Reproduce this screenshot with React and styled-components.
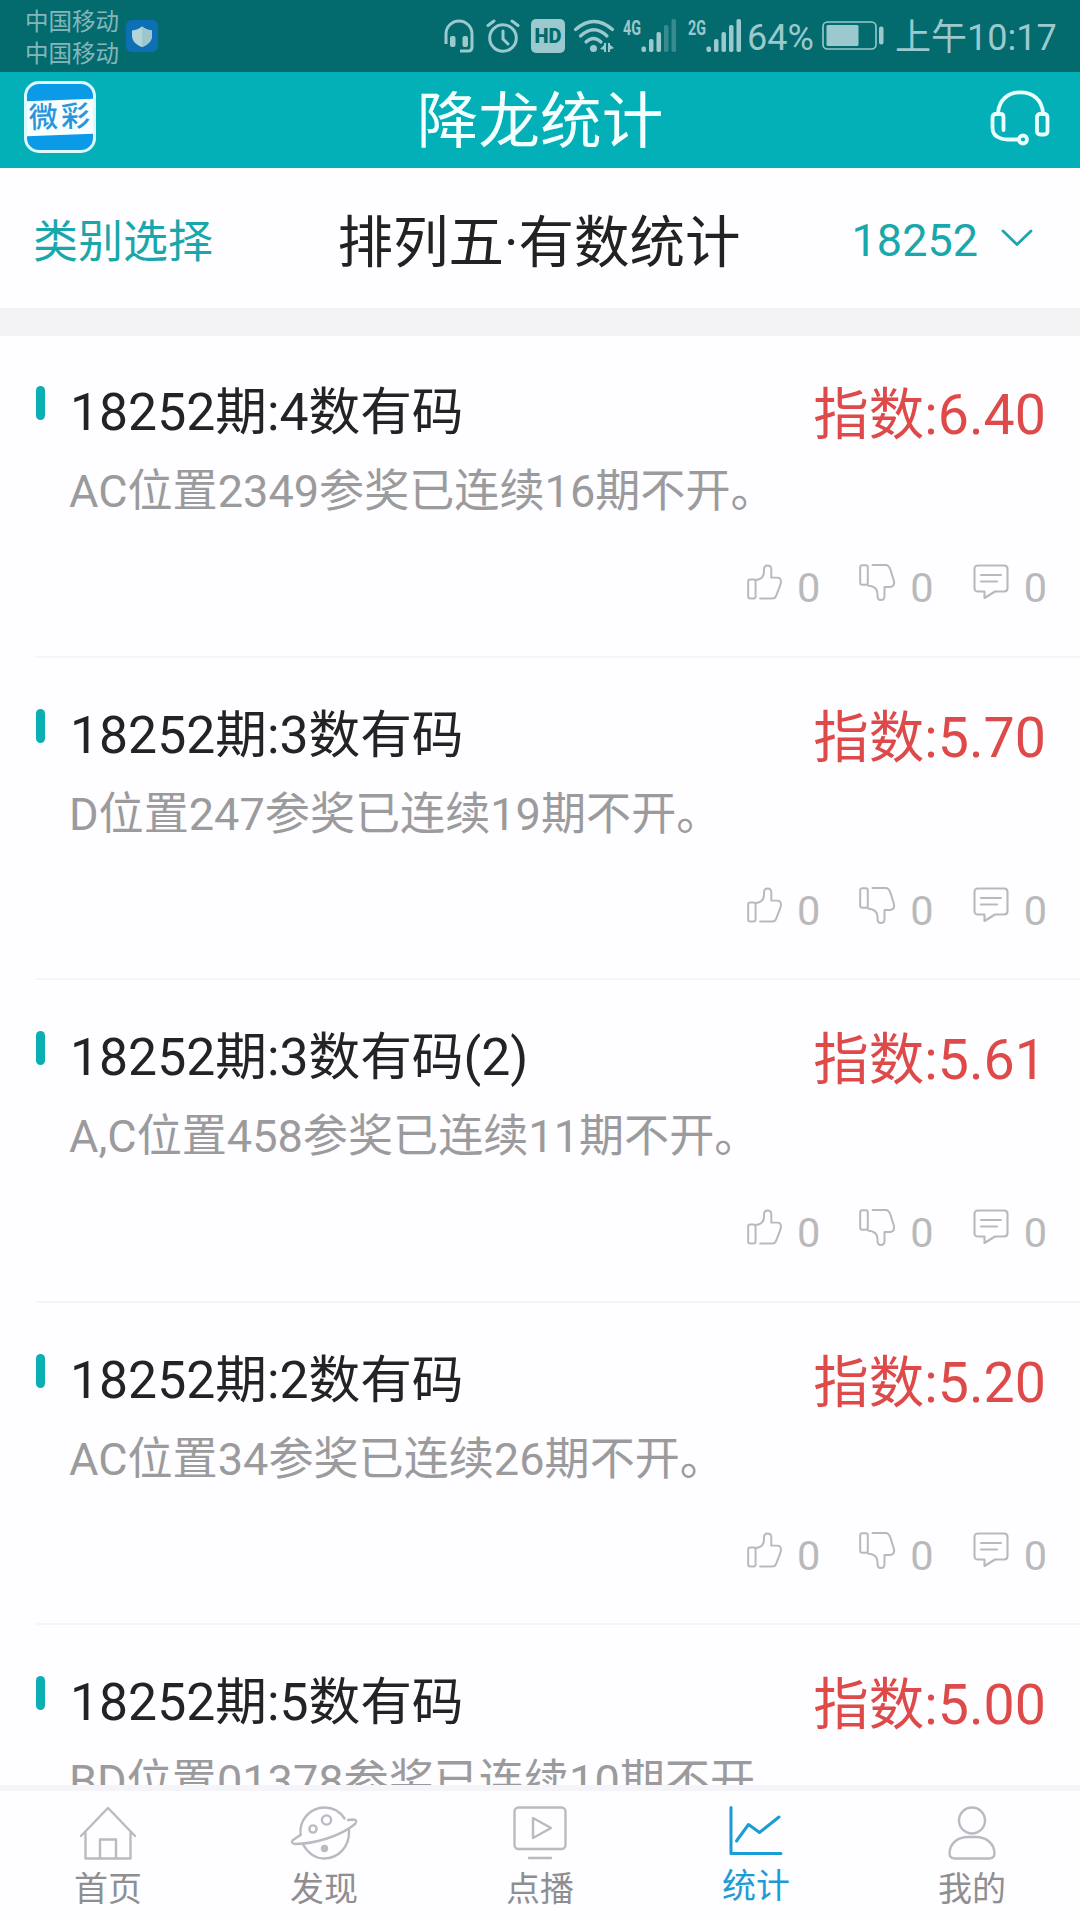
import React from "react";
import styled, { createGlobalStyle } from "styled-components";

const GlobalStyle = createGlobalStyle`
  * {
    box-sizing: border-box;
  }

  body {
    margin: 0;
    background: #fefdff;
    font-family: Roboto, "Noto Sans CJK SC", sans-serif;
  }

  svg {
    display: block;
    flex: none;
    overflow: visible;
  }
`;

const Screen = styled.div`
  width: 1080px;
  height: 1920px;
  display: flex;
  flex-direction: column;
  overflow: hidden;
  background: #fefdff;
`;

const StatusBar = styled.div`
  flex: none;
  height: 72px;
  display: flex;
  align-items: center;
  padding: 0 24px 0 25px;
  background: #036a6d;
  color: #9bc9cd;
`;

const Carriers = styled.div`
  width: 101px;
  padding-top: 3px;
  font-size: 23.5px;
  line-height: 32px;
  color: #83b7bb;
  white-space: nowrap;
`;

const StatusIcons = styled.div`
  display: flex;
  align-items: center;
  margin-left: auto;
`;

const StatusText = styled.span`
  width: ${(props) => props.$width}px;
  margin-left: ${(props) => props.$gap}px;
  padding-top: 3px;
  font-size: 36px;
  line-height: 68px;
  white-space: nowrap;
`;

const Gap = styled.i`
  width: ${(props) => props.$w}px;
`;

const Header = styled.header`
  flex: none;
  height: 96px;
  display: flex;
  align-items: center;
  justify-content: space-between;
  padding: 0 30px 0 24px;
  background: #03b0b8;
`;

const Logo = styled.div`
  width: 72px;
  height: 72px;
  margin-bottom: 6px;
  display: flex;
  align-items: center;
  justify-content: center;
  overflow: hidden;
  border: 3px solid #dcfaff;
  border-radius: 15px;
  background: #0a9ae8;
`;

const LogoBand = styled.div`
  flex: none;
  width: 76px;
  height: 35px;
  padding-left: 2px;
  background: #f8feff;
  color: #2b95dc;
  font-size: 29px;
  font-weight: 500;
  line-height: 34px;
  letter-spacing: 3px;
  text-align: center;
  white-space: nowrap;
  transform: rotate(-2deg);
`;

const HeaderTitle = styled.h1`
  margin: 4px 0 0;
  padding-right: 6px;
  color: #f4ffff;
  font-size: 61.7px;
  font-weight: 400;
  line-height: 92px;
`;

const FilterBar = styled.div`
  flex: none;
  height: 168px;
  display: grid;
  grid-template-columns: 1fr auto 1fr;
  align-items: center;
  padding: 4px 47px 0 33px;
  border-bottom: 28px solid #f3f2f5;
  color: #1aa7ab;
  font-size: 45px;
`;

const Category = styled.div`
  margin-top: -4px;
`;

const FilterTitle = styled.h2`
  margin: 7px 0 0 12px;
  color: #222;
  font-size: 55.5px;
  font-weight: 400;
  line-height: 80px;
`;

const Issue = styled.div`
  display: flex;
  align-items: center;
  justify-content: flex-end;
  gap: 23px;

  svg {
    margin-bottom: 4px;
  }
`;

const List = styled.main`
  flex: 1;
  min-height: 0;
  margin-top: -1px;
  overflow: hidden;
`;

const Item = styled.article`
  height: 322.6px;
  margin-left: 36px;
  padding: 39px 34px 0 0;
  display: grid;
  grid-template-columns: 34px 1fr auto;
  grid-template-rows: 72px 80px 1fr;
  border-bottom: 2px solid #f5f4f7;
`;

const Marker = styled.span`
  width: 9px;
  height: 34px;
  margin-top: 12px;
  border-radius: 5px;
  background: #0aafb3;
`;

const ItemTitle = styled.h3`
  margin: 0;
  padding-top: 3px;
  color: #232225;
  font-size: 51.7px;
  font-weight: 400;
  line-height: 72px;
  white-space: nowrap;
`;

const Score = styled.div`
  padding-top: 6px;
  color: #de4a49;
  font-size: 55.5px;
  line-height: 72px;
  white-space: nowrap;
`;

const Description = styled.p`
  grid-column: 2 / 4;
  margin: 11px 0 0 -1px;
  color: #9b9b9d;
  font-size: 45.1px;
  line-height: 70px;
  white-space: nowrap;
`;

const Actions = styled.div`
  grid-column: 1 / 4;
  display: flex;
  justify-content: flex-end;
  gap: 39px;
  margin-right: -1px;
  padding-top: 37px;
`;

const Action = styled.div`
  display: flex;
  align-items: flex-start;
  gap: 15px;
  color: #b9b9bb;
  font-size: 41.5px;
  line-height: 49px;

  svg {
    margin-top: 1px;
  }
`;

const TabBar = styled.nav`
  flex: none;
  height: 135px;
  display: grid;
  grid-template-columns: repeat(5, 1fr);
  border-top: 6px solid #f5f4f8;
`;

const Tab = styled.a`
  display: flex;
  flex-direction: column;
  align-items: center;
  padding-top: 15px;
  color: ${(props) => (props.$active ? "#1c9cd4" : "#8f8f92")};
  font-size: 34px;
  line-height: 44px;

  span {
    margin-top: ${(props) => (props.$active ? 4 : 7)}px;
  }

  svg {
    color: ${(props) => (props.$active ? "#1c9cd4" : "#b9bbc2")};
  }
`;

const items = [
  { title: "18252期:4数有码", score: "6.40", text: "AC位置2349参奖已连续16期不开。" },
  { title: "18252期:3数有码", score: "5.70", text: "D位置247参奖已连续19期不开。" },
  { title: "18252期:3数有码(2)", score: "5.61", text: "A,C位置458参奖已连续11期不开。" },
  { title: "18252期:2数有码", score: "5.20", text: "AC位置34参奖已连续26期不开。" },
  { title: "18252期:5数有码", score: "5.00", text: "BD位置01378参奖已连续10期不开" },
];

const stroke = {
  fill: "none",
  stroke: "currentColor",
  strokeLinecap: "round",
  strokeLinejoin: "round",
};

const ShieldIcon = () => (
  <svg width="32" height="32" viewBox="0 0 32 32">
    <rect width="32" height="32" rx="6" fill="#0d6fb4" />
    <path d="M16 6.500C19 9 22 10 26 10.500V16C26 21 21.500 25 16 27C10.500 25 6 21 6 16V10.500C10 10 13 9 16 6.500Z" fill="#b3d5d9" />
    <path d="M16 6.500C19 9 22 10 26 10.500V16C26 21 21.500 25 16 27Z" fill="#9fc6cf" />
  </svg>
);

const StatusHeadphones = () => (
  <svg width="32" height="34" viewBox="0 0 32 34">
    <path d="M3 25V15A13 13 0 0 1 29 15V28Q29 32 25 32H17" {...stroke} strokeWidth="3" strokeLinecap="butt" />
    <rect x="7" y="17" width="5.500" height="11" rx="2" fill="currentColor" />
    <rect x="19.500" y="17" width="5.500" height="11" rx="2" fill="currentColor" />
  </svg>
);

const AlarmIcon = () => (
  <svg width="34" height="34" viewBox="0 0 34 34" {...stroke} strokeWidth="3">
    <circle cx="17" cy="19" r="13.300" />
    <path d="M17 12V20L22 25M2 6.500L8 2M32 6.500L26 2" />
  </svg>
);

const HdIcon = () => (
  <svg width="34" height="34" viewBox="0 0 34 34">
    <rect width="34" height="34" rx="5" fill="currentColor" />
    <text x="17" y="24" textAnchor="middle" fill="#036a6d" fontSize="20" fontWeight="900" textLength="27">HD</text>
  </svg>
);

const WifiIcon = () => (
  <svg width="40" height="34" viewBox="0 0 40 34">
    <path d="M1.500 10.500Q20 -5.500 38.500 10.500M6.500 17Q20 4.500 33 17M12 23Q19.500 16 27 23" {...stroke} strokeWidth="3.200" />
    <circle cx="19.500" cy="29.500" r="3.500" fill="currentColor" />
    <path d="M31 24V33M35 24V33" stroke="currentColor" strokeWidth="2" />
    <path d="M31 25V31L26 30ZM35 25L40 29L35 31Z" fill="currentColor" />
  </svg>
);

const bars = [
  { y: 27.5, h: 5.5 },
  { y: 20, h: 13 },
  { y: 13, h: 20 },
  { y: 6, h: 27 },
  { y: 0, h: 33 },
];

const SignalIcon = ({ label, level }) => (
  <svg width="54" height="34" viewBox="0 0 54 34">
    <text x="0" y="16" fill="currentColor" fontSize="21" fontWeight="700" textLength="18" lengthAdjust="spacingAndGlyphs">{label}</text>
    {bars.map((bar, i) => (
      <rect key={i} x={18.5 + i * 7.5} y={bar.y} width="4.500" height={bar.h} rx="1.800" fill="currentColor" opacity={i < level ? 1 : 0.35} />
    ))}
  </svg>
);

const BatteryIcon = () => (
  <svg width="62" height="30" viewBox="0 0 62 30">
    <rect x="1" y="1" width="53" height="27" rx="4.500" {...stroke} strokeWidth="1.600" />
    <rect x="4.500" y="4" width="32" height="21" rx="1.500" fill="currentColor" />
    <rect x="57" y="5.500" width="4.500" height="18" rx="2" fill="currentColor" />
  </svg>
);

const ServiceIcon = () => (
  <svg width="60" height="56" viewBox="0 2 60 56" {...stroke} stroke="#e9ffff" strokeWidth="3.800">
    <path d="M8 23C9 10 18 2.300 30.500 2.300S52 10 53 23" />
    <path d="M13.500 40V27Q13.500 24 10.500 24H6Q2.500 24 2.500 27.500V38Q2.500 46 11 48.500Q14 49.500 18 49.500H28" />
    <rect x="47" y="24" width="10.500" height="20.500" rx="3" />
    <circle cx="33" cy="49.500" r="4" />
  </svg>
);

const ChevronIcon = () => (
  <svg width="32" height="18" viewBox="0 0 32 18" {...stroke} strokeWidth="2.800">
    <path d="M2 2L16 15.500L30 2" />
  </svg>
);

const LikeIcon = () => (
  <svg width="35" height="36" viewBox="0 0 36 36" {...stroke} strokeWidth="2">
    <rect x="1.200" y="15.500" width="7.600" height="19.500" rx="2" />
    <path d="M9 16C14.500 15.500 17.500 12 17.500 7V5Q17.500 1 21.200 1T25 5V13.500H31Q35 13.500 35 18Q34.500 21 32.500 25.500L30 32Q29 35 26 35H13.500" />
  </svg>
);

const DislikeIcon = () => (
  <svg width="36" height="37" viewBox="0 0 36 37" {...stroke} strokeWidth="2">
    <rect x="1.200" y="1.200" width="7.600" height="19.500" rx="2" />
    <path d="M9 21.500C15 22 18.500 25 18.500 30V32Q18.500 36 22 36T25.500 32V23H31.500Q36 22 35 17L31.500 6Q30 1 26.500 1H13.500" />
  </svg>
);

const CommentIcon = () => (
  <svg width="36" height="36" viewBox="0 0 36 36" {...stroke} strokeWidth="2.100">
    <path d="M5 1.500H31Q34.500 1.500 34.500 5V24Q34.500 27.500 31 27.500H22L11.500 34V27.500H5Q1.500 27.500 1.500 24V5Q1.500 1.500 5 1.500ZM8 11H28M8 17.500H24" />
  </svg>
);

const HomeIcon = () => (
  <svg width="58" height="54" viewBox="0 0 58 54" {...stroke} strokeWidth="2.400">
    <path d="M2 30L29 2L56 30M6.500 27V52.500H51.500V27M21 52V33.500H37V52" />
  </svg>
);

const DiscoverIcon = () => (
  <svg width="68" height="54" viewBox="0 0 68 54" {...stroke} strokeWidth="2.400">
    <path d="M10.500 29C9 14 20 1.500 34.500 1.500C43 1.500 50 5.500 54.500 12.500" />
    <path d="M10.500 29L3 34Q0 37 5 38C24 38 51 30 65 18Q68 14 63.500 13.500L58 14" />
    <path d="M13 38.500C18 47 25.500 52.500 34 52.500C48 52.500 60 41 59 24" />
    <circle cx="23" cy="23" r="3.600" />
    <circle cx="36.500" cy="14" r="4.600" />
    <circle cx="34.500" cy="42.500" r="2.500" fill="currentColor" />
  </svg>
);

const VideoIcon = () => (
  <svg width="54" height="54" viewBox="0 0 54 54" {...stroke} strokeWidth="2.400">
    <rect x="1.500" y="1.500" width="51" height="41.500" rx="4" />
    <path d="M20 12V32L38 22ZM16 52H38" />
  </svg>
);

const StatsIcon = () => (
  <svg width="54" height="54" viewBox="0 0 54 54" {...stroke} strokeWidth="3">
    <path d="M2 1.500V47.500H52M7.500 35L19.500 18.500L30.500 26.500L50 11" />
  </svg>
);

const UserIcon = () => (
  <svg width="48" height="54" viewBox="0 0 48 54" {...stroke} strokeWidth="2.400">
    <circle cx="24" cy="14.500" r="13" />
    <path d="M7 52.500Q1.500 52.500 1.500 47C2 37 10 31 20 31H28C38 31 46 37 46.500 47Q46.500 52.500 41 52.500Z" />
  </svg>
);

const tabs = [
  { name: "首页", icon: <HomeIcon /> },
  { name: "发现", icon: <DiscoverIcon /> },
  { name: "点播", icon: <VideoIcon /> },
  { name: "统计", icon: <StatsIcon />, active: true },
  { name: "我的", icon: <UserIcon /> },
];

const App = () => {
  return (
    <Screen>
      <GlobalStyle />

      <StatusBar>
        <Carriers>
          <div>中国移动</div>
          <div>中国移动</div>
        </Carriers>
        <ShieldIcon />
        <StatusIcons>
          <StatusHeadphones />
          <Gap $w={11} />
          <AlarmIcon />
          <Gap $w={11} />
          <HdIcon />
          <Gap $w={9} />
          <WifiIcon />
          <Gap $w={9} />
          <SignalIcon label="4G" level={3} />
          <Gap $w={11} />
          <SignalIcon label="2G" level={5} />
          <StatusText $width={68} $gap={5}>64%</StatusText>
          <Gap $w={7} />
          <BatteryIcon />
          <StatusText $width={161} $gap={11}>上午10:17</StatusText>
        </StatusIcons>
      </StatusBar>

      <Header>
        <Logo>
          <LogoBand>微彩</LogoBand>
        </Logo>
        <HeaderTitle>降龙统计</HeaderTitle>
        <ServiceIcon />
      </Header>

      {/* Category and issue filter */}
      <FilterBar>
        <Category>类别选择</Category>
        <FilterTitle>排列五·有数统计</FilterTitle>
        <Issue>
          18252
          <ChevronIcon />
        </Issue>
      </FilterBar>

      <List>
        {items.map((item) => (
          <Item key={item.title}>
            <Marker />
            <ItemTitle>{item.title}</ItemTitle>
            <Score>指数:{item.score}</Score>
            <Description>{item.text}</Description>
            <Actions>
              <Action><LikeIcon />0</Action>
              <Action><DislikeIcon />0</Action>
              <Action><CommentIcon />0</Action>
            </Actions>
          </Item>
        ))}
      </List>

      {/* Bottom tabs */}
      <TabBar>
        {tabs.map((tab) => (
          <Tab key={tab.name} $active={tab.active}>
            {tab.icon}
            <span>{tab.name}</span>
          </Tab>
        ))}
      </TabBar>
    </Screen>
  );
};

export default App;
